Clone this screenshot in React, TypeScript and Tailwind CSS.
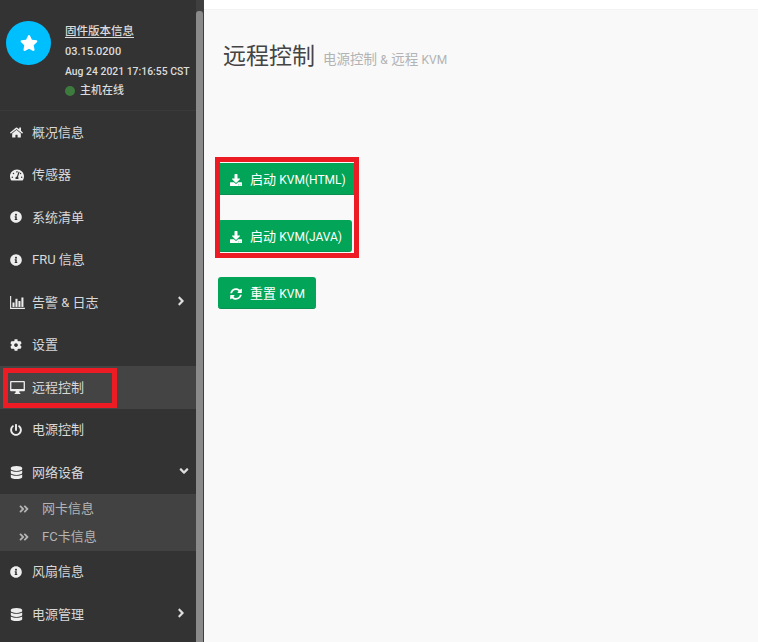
import React from "react";
import { FaHome, FaTachometerAlt, FaInfoCircle, FaCog, FaPowerOff, FaDatabase, FaAngleRight, FaAngleDown, FaAngleDoubleRight, FaStar, FaDownload, FaSyncAlt } from "react-icons/fa";

function BarChart() {
  return (
    <svg viewBox="0 0 16 14" className="h-[13px] w-[15px]" fill="currentColor">
      <path d="M0 0h1.2v12.6H16V14H0z" />
      <rect x="2.6" y="7" width="2.2" height="4.8" />
      <rect x="5.8" y="3" width="2.2" height="8.8" />
      <rect x="9" y="5.4" width="2.2" height="6.4" />
      <rect x="12.2" y="1.6" width="2.2" height="10.2" />
    </svg>
  );
}

function Monitor() {
  return (
    <svg viewBox="0 0 16 14" className="h-[13px] w-[15px]" fill="currentColor">
      <path fillRule="evenodd" d="M1 0h14a1 1 0 0 1 1 1v9a1 1 0 0 1-1 1H10v1.4l1.2 1.1v.5H4.8v-.5L6 12.4V11H1a1 1 0 0 1-1-1V1a1 1 0 0 1 1-1zm.4 1.4v7.2h13.2V1.4z" />
    </svg>
  );
}

function Item({ icon, label, arrow, active }: { icon: React.ReactNode; label: string; arrow?: "right" | "down"; active?: boolean }) {
  return (
    <div className={`relative flex h-[42.5px] items-center pl-[10px] text-[13px] text-[#d8d8d8] ${active ? "bg-[#444444]" : ""}`}>
      <span className="flex w-[22px] shrink-0 items-center text-[#eeeeee]">{icon}</span>
      <span>{label}</span>
      {arrow === "right" && <FaAngleRight className="absolute right-[8px] top-[13px] text-[14px] text-[#dddddd]" />}
      {arrow === "down" && <FaAngleDown className="absolute right-[5px] top-[13px] text-[14px] text-[#dddddd]" />}
    </div>
  );
}

function Sub({ label }: { label: string }) {
  return (
    <div className="flex h-[28px] items-center pl-[19px] text-[13px] text-[#b4b4b4]">
      <FaAngleDoubleRight className="mr-[13px] w-[10px] text-[12px] text-[#b4b4b4]" />
      <span>{label}</span>
    </div>
  );
}

function Btn({ icon, cjk, latin, w, square }: { icon: React.ReactNode; cjk: string; latin: string; w: string; square?: boolean }) {
  return (
    <div className={`flex h-[32px] items-center rounded-[3px] border-b border-[#0a9050] bg-[#02a457] pl-[12px] pt-[2px] text-[13px] text-[#ffffff] ${w} ${square ? "rounded-none" : ""}`}>
      <span className="mr-[7px] flex w-[13px] items-center text-[12px]">{icon}</span>
      <span className="whitespace-nowrap">
        {cjk} <span className="text-[12px]">{latin}</span>
      </span>
    </div>
  );
}

export default function App() {
  return (
    <div className="flex h-[642px] w-[758px] overflow-hidden bg-[#f9f9f9] font-['Roboto','Noto_Sans_CJK_SC',sans-serif]">
      <aside className="relative flex h-full w-[204px] shrink-0 bg-[#333333]">
        <div className="flex min-w-0 flex-1 flex-col">
          <div className="flex h-[111px] shrink-0 border-b border-[#3a3a3a] pl-[6px] pt-[22px]">
            <div className="-mt-[1px] flex h-[44px] w-[45px] shrink-0 items-center justify-center rounded-full bg-[#00bfff] text-[18px] text-white">
              <FaStar />
            </div>
            <div className="ml-[14px] flex flex-col whitespace-nowrap text-[11px] font-medium leading-[19.8px] text-[#dcdcdc]">
              <span className="text-[11.5px] underline underline-offset-2">固件版本信息</span>
              <span>03.15.0200</span>
              <span className="text-[10.4px]">Aug 24 2021 17:16:55 CST</span>
              <span className="flex items-center">
                <span className="mr-[5px] h-[10px] w-[10px] rounded-full bg-[#3d7a3d]" />
                主机在线
              </span>
            </div>
          </div>
          <Item icon={<FaHome className="text-[13px]" />} label="概况信息" />
          <Item icon={<FaTachometerAlt className="text-[14px]" />} label="传感器" />
          <Item icon={<FaInfoCircle className="text-[12px]" />} label="系统清单" />
          <Item icon={<FaInfoCircle className="text-[12px]" />} label="FRU 信息" />
          <Item icon={<BarChart />} label="告警 & 日志" arrow="right" />
          <Item icon={<FaCog className="text-[12px]" />} label="设置" />
          <Item icon={<Monitor />} label="远程控制" active />
          <Item icon={<FaPowerOff className="text-[12px]" />} label="电源控制" />
          <Item icon={<FaDatabase className="text-[13px]" />} label="网络设备" arrow="down" />
          <div className="h-[57px] bg-[#424242] pt-[1px]">
            <Sub label="网卡信息" />
            <Sub label="FC卡信息" />
          </div>
          <Item icon={<FaInfoCircle className="text-[12px]" />} label="风扇信息" />
          <Item icon={<FaDatabase className="text-[13px]" />} label="电源管理" arrow="right" />
        </div>
        <div className="h-full w-[8px] shrink-0 bg-[#3f3f3f] pt-[11px]">
          <div className="h-full w-[7px] rounded-t-[3px] bg-[#8a8a8a]" />
        </div>
        <div className="absolute left-[3px] top-[368px] h-[40px] w-[114px] border-[5px] border-[#ed1c24]" />
      </aside>
      <main className="relative flex-1">
        <div className="h-[10px] border-b border-[#f2f2f2] bg-white" />
        <div className="flex items-baseline whitespace-nowrap pl-[19px] pt-[31px]">
          <span className="text-[23px] leading-[32px] text-[#444444]">远程控制</span>
          <span className="ml-[8px] text-[13.5px] text-[#b3b3b3]">
            电源控制 <span className="text-[12px]">&</span> 远程 <span className="text-[12px]">KVM</span>
          </span>
        </div>
        <div className="ml-[14px] mt-[90px] flex flex-col items-start">
          <Btn icon={<FaDownload />} cjk="启动" latin="KVM(HTML)" w="w-[136px]" square />
          <div className="h-[25px]" />
          <Btn icon={<FaDownload />} cjk="启动" latin="KVM(JAVA)" w="w-[134px]" />
          <div className="h-[25px]" />
          <Btn icon={<FaSyncAlt />} cjk="重置" latin="KVM" w="w-[98px]" />
        </div>
        <div className="absolute left-[11px] top-[157px] h-[101px] w-[144px] border-[5px] border-[#ed1c24]" />
      </main>
    </div>
  );
}
